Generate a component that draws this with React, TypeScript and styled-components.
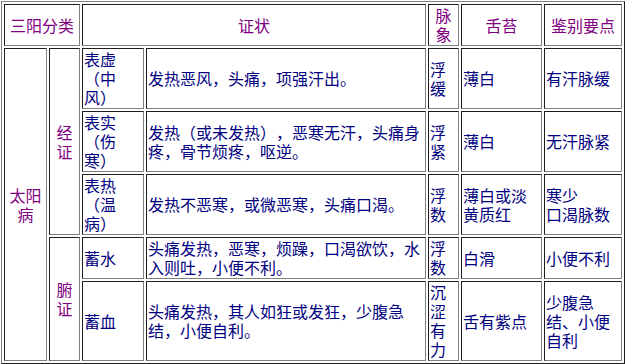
import { FC } from 'react'
import styled, { createGlobalStyle } from 'styled-components'

const GlobalStyle = createGlobalStyle`
  html, body {
    margin: 0;
    padding: 0;
    background: #fff;
  }
  body {
    font-family: "Noto Sans CJK SC", "Noto Sans", sans-serif;
  }
`

// 列宽（单元格边框盒宽度）
const COLS = [43, 31, 62, 280, 31, 81, 78]

const App: FC = () => {
  return (
    <>
      <GlobalStyle />
      <Table>
        <colgroup>
          {COLS.map((w, i) => (
            <Col key={i} $w={w} />
          ))}
        </colgroup>
        <tbody>
          <tr>
            <HeadCell colSpan={2}>三阳分类</HeadCell>
            <HeadCell colSpan={2}>证状</HeadCell>
            <HeadCell>脉象</HeadCell>
            <HeadCell>舌苔</HeadCell>
            <HeadCell>鉴别要点</HeadCell>
          </tr>
          <tr>
            <GroupCell rowSpan={5}>太阳病</GroupCell>
            <GroupCell rowSpan={3}>经证</GroupCell>
            <Cell>表虚（中风）</Cell>
            <Cell>发热恶风，头痛，项强汗出。</Cell>
            <Cell>浮缓</Cell>
            <Cell>薄白</Cell>
            <Cell>有汗脉缓</Cell>
          </tr>
          <tr>
            <Cell>表实（伤寒）</Cell>
            <Cell>发热（或未发热），恶寒无汗，头痛身疼，骨节烦疼，呕逆。</Cell>
            <Cell>浮紧</Cell>
            <Cell>薄白</Cell>
            <Cell>无汗脉紧</Cell>
          </tr>
          <tr>
            <Cell>表热（温病）</Cell>
            <Cell>发热不恶寒，或微恶寒，头痛口渴。</Cell>
            <Cell>浮数</Cell>
            <Cell>薄白或淡黄质红</Cell>
            <Cell>
              寒少
              <br />
              口渴脉数
            </Cell>
          </tr>
          <tr>
            <GroupCell rowSpan={2}>腑证</GroupCell>
            <Cell>蓄水</Cell>
            <Cell>头痛发热，恶寒，烦躁，口渴欲饮，水入则吐，小便不利。</Cell>
            <Cell>浮数</Cell>
            <Cell>白滑</Cell>
            <Cell>小便不利</Cell>
          </tr>
          <tr>
            <Cell>蓄血</Cell>
            <Cell>头痛发热，其人如狂或发狂，少腹急结，小便自利。</Cell>
            <Cell>沉涩有力</Cell>
            <Cell>舌有紫点</Cell>
            <Cell>少腹急结、小便自利</Cell>
          </tr>
        </tbody>
      </Table>
    </>
  )
}

const Table = styled.table`
  margin: 1px 0 0 1px;
  width: 624px;
  table-layout: fixed;
  border-collapse: separate;
  border-spacing: 2px;
  border: 1px solid;
  border-color: #808080 #1e1e1e #1e1e1e #808080;
  font-size: 16px;
  line-height: 19px;
  text-spacing-trim: space-all;
`

const Col = styled.col<{ $w: number }>`
  width: ${(p) => p.$w}px;
`

const Cell = styled.td`
  box-sizing: border-box;
  padding: 1px;
  border: 1px solid;
  border-color: #1e1e1e #808080 #808080 #1e1e1e;
  vertical-align: middle;
  text-align: left;
  color: #000080;
  font-weight: 400;
`

const HeadCell = styled(Cell)`
  text-align: center;
  color: #800080;
`

const GroupCell = styled(Cell)`
  text-align: center;
  color: #800080;
`

export default App
